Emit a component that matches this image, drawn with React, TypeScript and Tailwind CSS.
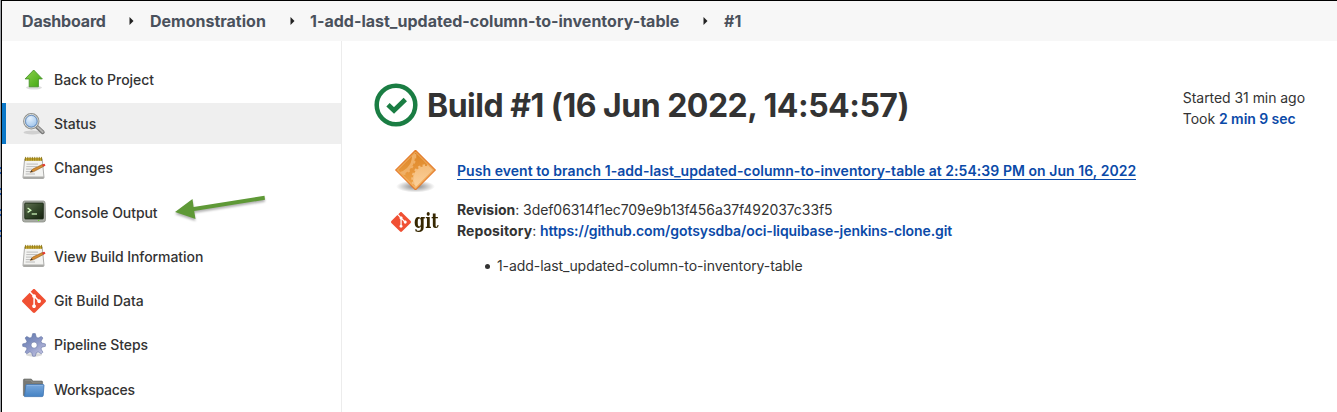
import type { ReactNode } from "react";
import { SiGit } from "react-icons/si";

function UpIcon() {
  return (
    <svg width="24" height="24" viewBox="0 0 24 24">
      <defs>
        <linearGradient id="up" x1="0" y1="0" x2="1" y2="1">
          <stop offset="0" stopColor="#8ed04f" />
          <stop offset="1" stopColor="#3fa80f" />
        </linearGradient>
      </defs>
      <ellipse cx="12" cy="19.6" rx="8" ry="2" fill="#000" opacity=".13" />
      <path d="M11.7 2 L20.3 10.9 H16.4 V18.8 H7.2 V10.9 H3.1 Z" fill="url(#up)" stroke="#47942a" strokeWidth=".9" strokeLinejoin="round" />
    </svg>
  );
}

function SearchIcon() {
  return (
    <svg width="24" height="24" viewBox="0 0 24 24">
      <defs>
        <radialGradient id="lens" cx=".4" cy=".3" r=".8">
          <stop offset="0" stopColor="#e4f1fd" />
          <stop offset="1" stopColor="#8db8e6" />
        </radialGradient>
      </defs>
      <ellipse cx="10.5" cy="20.4" rx="9" ry="2" fill="#000" opacity=".13" />
      <path d="M14.5 14.5 L20.7 20.2" stroke="#777" strokeWidth="4" strokeLinecap="round" />
      <path d="M15.5 15 L20.7 19.9" stroke="#b5b5b3" strokeWidth="2" strokeLinecap="round" strokeDasharray="2 1" />
      <circle cx="9.3" cy="9.2" r="7.2" fill="url(#lens)" stroke="#8d8f8c" strokeWidth="2" />
      <circle cx="9.3" cy="9.2" r="6.8" fill="none" stroke="#dcdedb" strokeWidth="1" />
      <circle cx="9.3" cy="9.2" r="5.8" fill="none" stroke="#5580b8" strokeWidth=".8" />
    </svg>
  );
}

function NotepadIcon() {
  return (
    <svg width="24" height="24" viewBox="0 0 24 24">
      <path d="M2.6 3 H20.2 L22 21.4 Q22 22.5 21 22.5 H2 Q1 22.5 1 21.4 Z" fill="#f3f3f1" stroke="#a3a3a0" strokeWidth=".9" />
      <path d="M1.2 20.5 H21.9 V21.7 Q21.7 22.5 21 22.5 H2 Q1.2 22.4 1.2 21.7 Z" fill="#a9a9a6" />
      <rect x="2.8" y="1.8" width="17.4" height="3" fill="#c4a62c" />
      <path d="M3.5 .9 V4.6 M5.8 .9 V4.6 M8.1 .9 V4.6 M10.4 .9 V4.6 M12.7 .9 V4.6 M15 .9 V4.6 M17.3 .9 V4.6 M19.5 .9 V4.6" stroke="#84701c" strokeWidth=".8" />
      <path d="M4.5 8.1 H16 M4.3 10.6 H15 M4 13.1 H10 M3.8 15.6 H9 M3.6 18 H13" stroke="#b6b6b4" strokeWidth=".9" />
      <path d="M8.3 16.3 L10.3 13.3 L20.3 8.5 L21.4 10.5 L11.8 15.6 Z" fill="#d78d32" stroke="#8d5516" strokeWidth=".6" />
      <path d="M8.3 16.3 L9.7 14.3 L10.8 15.8 Z" fill="#39342c" />
      <path d="M20 8.5 L22.5 7.8 L23.5 9.5 L21.4 10.7 Z" fill="#e23a32" />
    </svg>
  );
}

function TerminalIcon() {
  return (
    <svg width="24" height="24" viewBox="0 0 24 24">
      <defs>
        <linearGradient id="term" x1="0" y1="0" x2="1" y2="1">
          <stop offset="0" stopColor="#607052" />
          <stop offset=".5" stopColor="#34482b" />
          <stop offset="1" stopColor="#15200f" />
        </linearGradient>
      </defs>
      <path d="M2.5 1 H21.5 Q23 1 23.1 3 L23.6 19.5 Q23.6 22 21.2 22 H2.8 Q.4 22 .4 19.5 L.9 3 Q1 1 2.5 1 Z" fill="#a9aca5" stroke="#8c8f88" strokeWidth=".8" />
      <rect x="2.8" y="3.1" width="18.5" height="15.8" rx=".7" fill="url(#term)" stroke="#1c2a16" strokeWidth=".9" />
      <path d="M5.6 8 L8.8 10.2 L5.6 12.4" fill="none" stroke="#d8ffc4" strokeWidth="1.3" />
      <path d="M9.7 14 H15" stroke="#d8ffc4" strokeWidth="1.2" />
      <circle cx="16.6" cy="20.4" r=".7" fill="#63e516" />
    </svg>
  );
}

function GearIcon() {
  return (
    <svg width="24" height="24" viewBox="0 0 24 24">
      <defs>
        <linearGradient id="gear" x1="0" y1="0" x2=".7" y2="1">
          <stop offset="0" stopColor="#5f79ad" />
          <stop offset=".55" stopColor="#8b96c5" />
          <stop offset="1" stopColor="#bfc0df" />
        </linearGradient>
      </defs>
      <ellipse cx="12" cy="21.7" rx="8" ry="1.8" fill="#000" opacity=".15" />
      <path
        fillRule="evenodd"
        d="M10.7 .6 H13.3 L14.3 4.3 L16.1 5.1 L19.3 3.4 L20.9 5 L19 8.2 L19.7 10 L23.4 10.9 V13.3 L19.7 14.2 L19 16 L20.9 19.2 L19.3 20.8 L16.1 18.9 L14.3 19.7 L13.3 23.2 H10.7 L9.7 19.7 L7.9 18.9 L4.7 20.8 L3.1 19.2 L5 16 L4.3 14.2 L.7 13.3 V10.9 L4.3 10 L5 8.2 L3.1 5 L4.7 3.4 L7.9 5.1 L9.7 4.3 Z M12.1 9 A3.1 3.1 0 1 0 12.1 15.2 A3.1 3.1 0 1 0 12.1 9 Z"
        fill="url(#gear)"
        stroke="#6574a2"
        strokeWidth=".6"
      />
    </svg>
  );
}

function FolderIcon() {
  return (
    <svg width="24" height="24" viewBox="0 0 24 24">
      <defs>
        <linearGradient id="folder" x1="0" y1="0" x2="0" y2="1">
          <stop offset="0" stopColor="#78a7dc" />
          <stop offset="1" stopColor="#4583c4" />
        </linearGradient>
      </defs>
      <path d="M1.4 3 Q1.4 2 2.4 2 H9.3 L10.8 4 H19.6 Q20.6 4 20.6 5 V18.6 H1.4 Z" fill="#777874" stroke="#60615e" strokeWidth=".6" />
      <path d="M3.2 3.2 H8.8 L10.2 5.2 H19.4" fill="none" stroke="#999a96" strokeWidth=".7" />
      <path d="M4.7 7.6 H21.4 Q22 7.6 22 8.3 L21.2 18.5 Q21.1 19.6 20 19.6 H2.5 L3.8 8.4 Q3.9 7.6 4.7 7.6 Z" fill="url(#folder)" stroke="#3d73b1" strokeWidth=".8" />
      <path d="M4.7 8.4 H21" stroke="#a3c5eb" strokeWidth=".6" />
    </svg>
  );
}

const gitIcon = <SiGit size={24} color="#f05033" />;

const tasks: { label: string; icon: ReactNode; active?: boolean }[] = [
  { label: "Back to Project", icon: <UpIcon /> },
  { label: "Status", icon: <SearchIcon />, active: true },
  { label: "Changes", icon: <NotepadIcon /> },
  { label: "Console Output", icon: <TerminalIcon /> },
  { label: "View Build Information", icon: <NotepadIcon /> },
  { label: "Git Build Data", icon: gitIcon },
  { label: "Pipeline Steps", icon: <GearIcon /> },
  { label: "Workspaces", icon: <FolderIcon /> },
];

function Separator() {
  return (
    <svg width="5" height="8" viewBox="0 0 5 8" className="shrink-0">
      <path d="M.5 0 L4.5 4 L.5 8 Z" fill="#222" />
    </svg>
  );
}

function Arrow() {
  return (
    <svg width="100" height="36" viewBox="0 0 100 36" className="absolute top-[2px] left-[167px] drop-shadow-[0_2px_1px_rgba(0,0,0,0.3)]">
      <path d="M2 18 L19.5 5 L20.6 13 L91.5 1.8 L92 5.8 L21.2 17 L22.5 25 Z" fill="#5f9937" />
    </svg>
  );
}

function BuildTrigger() {
  return (
    <svg width="44" height="46" viewBox="0 0 44 46">
      <defs>
        <linearGradient id="dia" x1="0" y1="0" x2="0" y2="1">
          <stop offset="0" stopColor="#dc8426" />
          <stop offset="1" stopColor="#f1a64d" />
        </linearGradient>
        <linearGradient id="cog" x1="0" y1="0" x2="0" y2="1">
          <stop offset="0" stopColor="#f5bd7c" />
          <stop offset="1" stopColor="#fcd5a2" />
        </linearGradient>
        <clipPath id="diaClip">
          <path d="M22.5 4.5 L40 22 L22.5 39.5 L5 22 Z" />
        </clipPath>
        <radialGradient id="shade">
          <stop offset="0" stopColor="#000" stopOpacity=".5" />
          <stop offset="1" stopColor="#000" stopOpacity="0" />
        </radialGradient>
      </defs>
      <ellipse cx="22.5" cy="38.5" rx="19.5" ry="6" fill="url(#shade)" />
      <path d="M22.5 2 L42.5 22 L22.5 42 L2.5 22 Z" fill="url(#dia)" stroke="#e46a19" strokeWidth="1" />
      <g clipPath="url(#diaClip)">
        <circle cx="33" cy="31" r="13" fill="url(#cog)" />
        <circle cx="33" cy="31" r="13.5" fill="none" stroke="#f5bd7c" strokeWidth="2.4" strokeDasharray="2.4 2.2" />
        <circle cx="2" cy="8" r="18.5" fill="none" stroke="#f0b067" strokeWidth="3" />
        <circle cx="2" cy="8" r="20.3" fill="none" stroke="#f0b067" strokeWidth="2" strokeDasharray="2.4 2.8" />
      </g>
      <path d="M22.5 4 L40.5 22 L22.5 40 L4.5 22 Z" fill="none" stroke="#f8bd7b" strokeWidth=".7" />
    </svg>
  );
}

function WindowEdge() {
  return (
    <div className="flex w-[2px] shrink-0 flex-col gap-[14px] border-r border-black bg-[#a0a3a8] pt-[167px]">
      {[0, 1, 2, 3].map((mark) => (
        <span key={mark} className="h-[7px] w-px shrink-0 border-y-2 border-[#174ea6]" />
      ))}
    </div>
  );
}

export default function App() {
  return (
    <div className="flex h-[412px] w-[1337px] overflow-hidden bg-white font-['Inter',sans-serif] text-[14px] text-[#333]">
      <WindowEdge />
      <div className="flex min-w-0 flex-1 flex-col border-t border-black">
        <nav className="flex h-10 shrink-0 items-center bg-[#f7f7f7] pl-5 text-[16px] font-bold whitespace-nowrap text-[#4a515c]">
          <span className="w-[107px] tracking-[-0.17px]">Dashboard</span>
          <Separator />
          <span className="ml-4 w-[140px]">Demonstration</span>
          <Separator />
          <span className="ml-[15px] w-[393px] tracking-[0.01px]">1-add-last_updated-column-to-inventory-table</span>
          <Separator />
          <span className="ml-4">#1</span>
        </nav>
        <div className="flex min-h-0 flex-1">
          <aside className="flex w-[340px] shrink-0 flex-col gap-[3.24px] border-r border-[#ececec] pt-[18px]">
            {tasks.map((task) => (
              <div
                key={task.label}
                className={
                  "relative flex h-[41px] shrink-0 items-center gap-2 border-l-4 pl-4 " +
                  (task.active ? "border-[#0b78c8] bg-[#efefef]" : "border-transparent")
                }
              >
                <span className="flex h-6 w-6 shrink-0 items-center">{task.icon}</span>
                <span
                  className={
                    "font-medium whitespace-nowrap " +
                    (task.label === "Workspaces" ? "tracking-[-0.25px]" : "tracking-[-0.06px]")
                  }
                >
                  {task.label}
                </span>
                {task.label === "Console Output" && <Arrow />}
              </div>
            ))}
          </aside>
          <main className="flex min-w-0 flex-1 items-start justify-between pr-8 pl-8">
            <div>
              <h1 className="mt-[41px] flex h-[46px] items-center gap-[9px] text-[32px] font-bold tracking-[-0.5px] whitespace-nowrap">
                <svg width="44" height="44" viewBox="0 0 44 44">
                  <circle cx="22" cy="22" r="19.3" fill="none" stroke="#1a7d43" strokeWidth="4.5" />
                  <path d="M14 21.8 L20 27.5 L31.3 16.5" fill="none" stroke="#1a7d43" strokeWidth="4.8" />
                </svg>
                <span className="pt-[2px]">Build #1 (16 Jun 2022, 14:54:57)</span>
              </h1>
              <div className="mt-5 flex h-[46px] items-center pl-[19px]">
                <BuildTrigger />
                <a className="ml-5 border-b border-[#0b4aa8] leading-[17px] font-semibold tracking-[0.053px] whitespace-nowrap text-[#0b4aa8]">
                  Push event to branch 1-add-last_updated-column-to-inventory-table at 2:54:39 PM on Jun 16, 2022
                </a>
              </div>
              <div className="mt-[5px] flex pl-4">
                <div className="flex h-8 w-[67px] items-center gap-[3px] pt-[14px] pl-px">
                  <SiGit size={20} color="#f05033" />
                  <span className="inline-block origin-left scale-x-[0.8] pb-[2px] font-['DejaVu_Serif',serif] text-[20px] leading-6 font-bold text-[#362701]">git</span>
                </div>
                <div className="leading-[21px] tracking-[-0.07px] whitespace-nowrap">
                  <p><b className="font-bold tracking-normal">Revision</b>: 3def06314f1ec709e9b13f456a37f492037c33f5</p>
                  <p><b className="font-bold tracking-[0.08px]">Repository</b>: <a className="font-semibold tracking-[-0.08px] text-[#0b4aa8]">https://github.com/gotsysdba/oci-liquibase-jenkins-clone.git</a></p>
                  <ul className="mt-[14px] pl-[28px]">
                    <li className="flex items-center gap-[7px]">
                      <span className="mt-px h-[5px] w-[5px] rounded-full bg-[#333]" />
                      1-add-last_updated-column-to-inventory-table
                    </li>
                  </ul>
                </div>
              </div>
            </div>
            <div className="mt-[46px] leading-[21px] whitespace-nowrap">
              <p className="tracking-[-0.05px]">Started 31 min ago</p>
              <p className="tracking-[-0.05px]">Took <a className="font-semibold text-[#0b4aa8]">2 min 9 sec</a></p>
            </div>
          </main>
        </div>
      </div>
    </div>
  );
}
